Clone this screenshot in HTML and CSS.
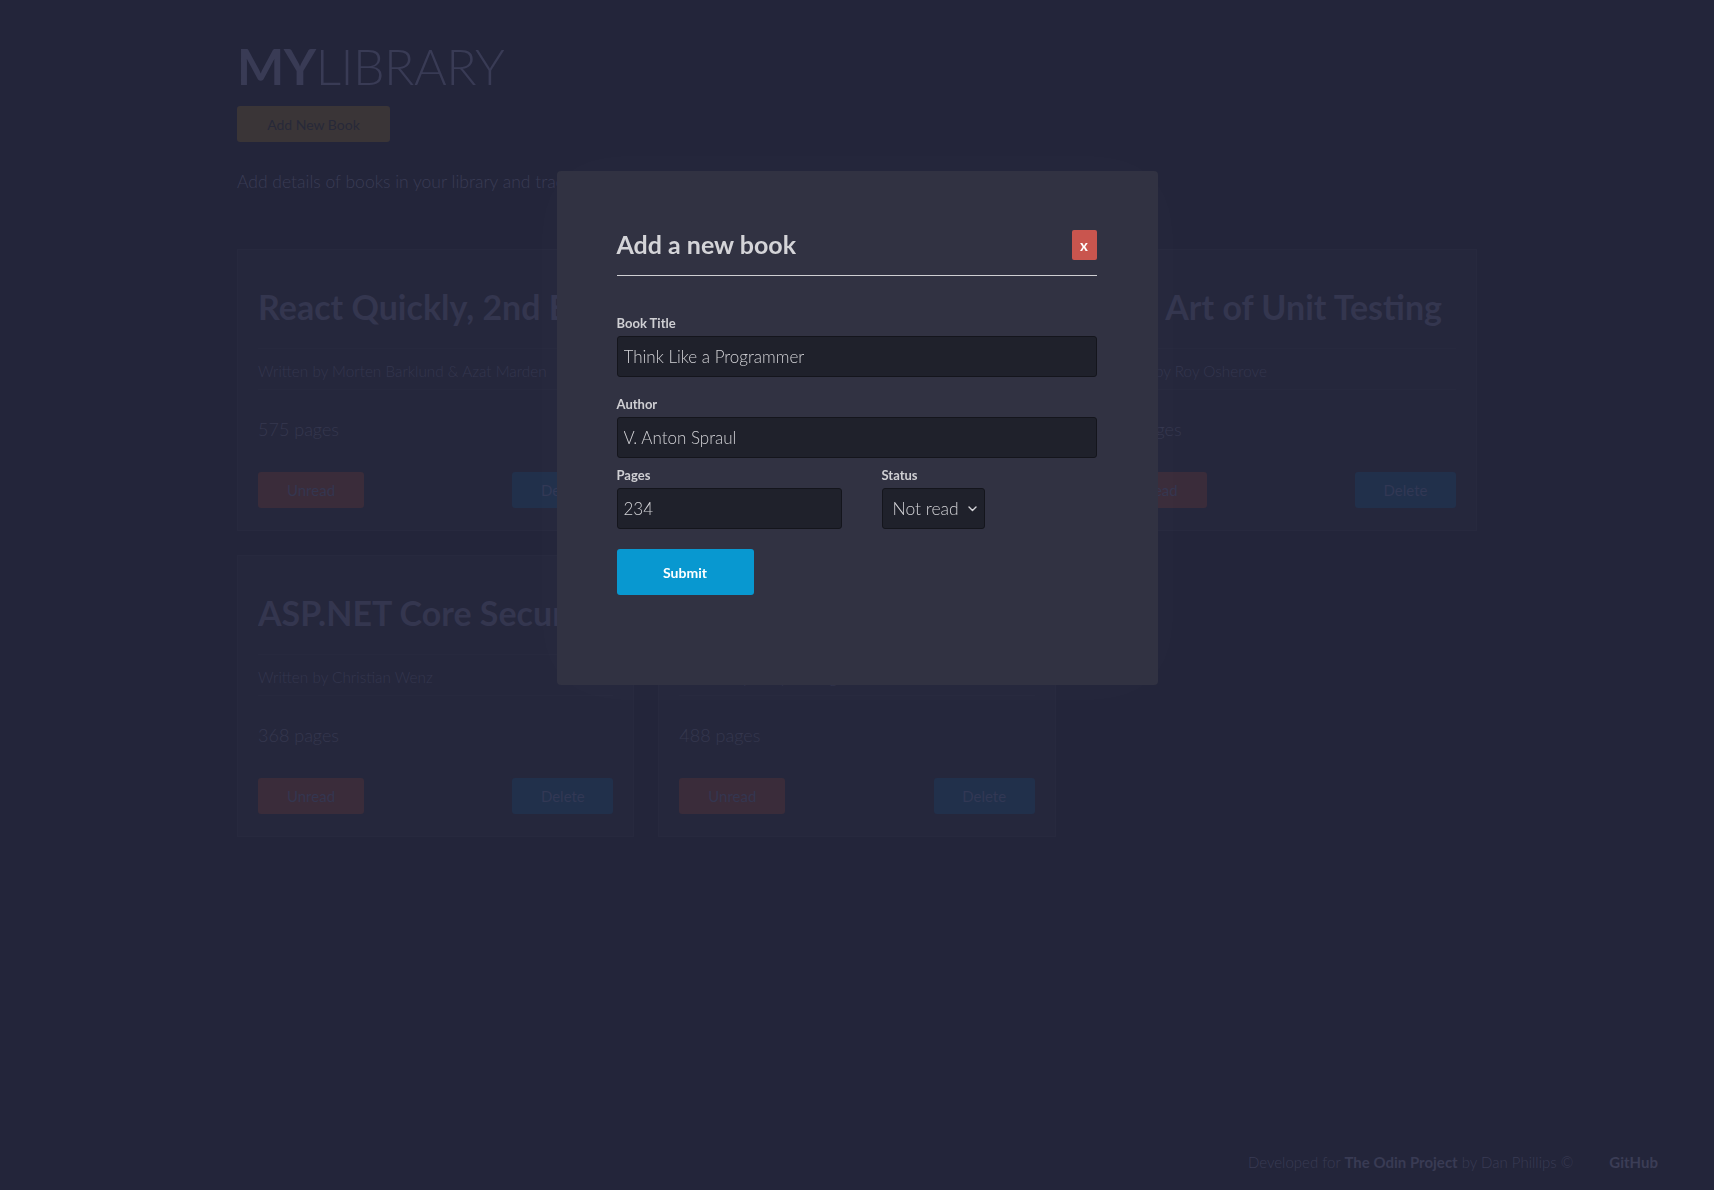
FILE: index.html
```html
<!DOCTYPE html>
<html lang="en">
<head>
<meta charset="utf-8">
<title>My Library</title>
<link rel="stylesheet" href="styles.css">
</head>
<body>
<div class="page">
  <main class="container">
    <h1 class="logo"><span class="logo-bold">MY</span><span class="logo-thin">LIBRARY</span></h1>
    <button class="btn-add" type="button">Add New Book</button>
    <p class="intro">Add details of books in your library and track which ones you have read.</p>

    <section class="cards">
      <article class="card">
        <h2 class="card-title">React Quickly, 2nd Edition</h2>
        <p class="card-author">Written by Morten Barklund &amp; Azat Marden</p>
        <p class="card-pages">575 pages</p>
        <div class="card-actions">
          <button class="btn-status" type="button">Unread</button>
          <button class="btn-delete" type="button">Delete</button>
        </div>
      </article>
      <article class="card">
        <h2 class="card-title">Eloquent JavaScript</h2>
        <p class="card-author">Written by Marijn Haverbeke</p>
        <p class="card-pages">472 pages</p>
        <div class="card-actions">
          <button class="btn-status" type="button">Unread</button>
          <button class="btn-delete" type="button">Delete</button>
        </div>
      </article>
      <article class="card">
        <h2 class="card-title">The Art of Unit Testing</h2>
        <p class="card-author">Written by Roy Osherove</p>
        <p class="card-pages">292 pages</p>
        <div class="card-actions">
          <button class="btn-status" type="button">Unread</button>
          <button class="btn-delete" type="button">Delete</button>
        </div>
      </article>
      <article class="card">
        <h2 class="card-title">ASP.NET Core Security</h2>
        <p class="card-author">Written by Christian Wenz</p>
        <p class="card-pages">368 pages</p>
        <div class="card-actions">
          <button class="btn-status" type="button">Unread</button>
          <button class="btn-delete" type="button">Delete</button>
        </div>
      </article>
      <article class="card">
        <h2 class="card-title">Grokking Algorithms</h2>
        <p class="card-author">Written by Aditya Bhargava</p>
        <p class="card-pages">488 pages</p>
        <div class="card-actions">
          <button class="btn-status" type="button">Unread</button>
          <button class="btn-delete" type="button">Delete</button>
        </div>
      </article>
    </section>
  </main>

  <footer class="footer">
    <span class="footer-credit">Developed for <strong>The Odin Project</strong> by Dan Phillips ©</span>
    <a class="footer-link" href="#">GitHub</a>
  </footer>
</div>

<div class="overlay">
  <div class="modal">
    <div class="modal-header">
      <h2 class="modal-title">Add a new book</h2>
      <button class="btn-close" type="button">x</button>
    </div>
    <form class="modal-form">
      <div class="field field-title">
        <label class="field-label" for="title">Book Title</label>
        <input class="field-input" id="title" type="text" value="Think Like a Programmer">
      </div>
      <div class="field field-author">
        <label class="field-label" for="author">Author</label>
        <input class="field-input" id="author" type="text" value="V. Anton Spraul">
      </div>
      <div class="field-row">
        <div class="field field-pages">
          <label class="field-label" for="pages">Pages</label>
          <input class="field-input" id="pages" type="text" value="234">
        </div>
        <div class="field field-status">
          <label class="field-label" for="status">Status</label>
          <div class="select-wrap">
            <select class="field-select" id="status">
              <option>Not read</option>
              <option>Read</option>
            </select>
            <svg class="select-chevron" width="9" height="6" viewBox="0 0 9 6"><path d="M1 1 L4.5 4.5 L8 1" fill="none" stroke="#d6d6da" stroke-width="1.4" stroke-linecap="round" stroke-linejoin="round"/></svg>
          </div>
        </div>
      </div>
      <button class="btn-submit" type="button">Submit</button>
    </form>
  </div>
</div>
</body>
</html>
```

FILE: styles.css
```css
* { box-sizing: border-box; }

html, body {
  margin: 0;
  padding: 0;
}

body {
  background: #23253a;
  font-family: "Lato", "Open Sans", sans-serif;
  color: #3a3c54;
}

.page {
  min-height: 100vh;
  display: flex;
  flex-direction: column;
}

.container {
  width: 1240px;
  margin: 0 auto;
  padding-top: 36px;
}

.logo {
  margin: 0;
  font-size: 50px;
  line-height: 60px;
  color: #393b55;
  letter-spacing: -0.5px;
}

.logo-bold { font-weight: 700; }
.logo-thin { font-weight: 300; }

.btn-add {
  display: block;
  margin-top: 10px;
  width: 153px;
  height: 36px;
  border: none;
  border-radius: 3px;
  background: #3a3537;
  color: #272939;
  font-family: inherit;
  font-size: 14px;
}

.intro {
  margin: 28px 0 0;
  font-size: 17.5px;
  line-height: 24px;
  font-weight: 300;
  color: #3a3c55;
}

.cards {
  margin-top: 55px;
  display: grid;
  grid-template-columns: repeat(3, 1fr);
  gap: 24px;
}

.card {
  background: #25273c;
  border: 1px solid #27293e;
  padding: 17px 20px 22px;
  min-width: 0;
}

.card-title {
  margin: 20px 0 21px;
  font-size: 34px;
  line-height: 40px;
  font-weight: 700;
  color: #34364f;
  white-space: nowrap;
  overflow: hidden;
  text-overflow: ellipsis;
}

.card-author {
  margin: 0;
  border-top: 1px solid #27293e;
  border-bottom: 1px solid #27293e;
  padding: 11px 0 7px;
  font-size: 15.3px;
  line-height: 22px;
  font-weight: 300;
  color: #34364e;
}

.card-pages {
  margin: 27px 0 0;
  font-size: 18px;
  line-height: 24px;
  font-weight: 300;
  color: #35374f;
}

.card-actions {
  margin-top: 31px;
  display: flex;
  justify-content: space-between;
}

.btn-status,
.btn-delete {
  height: 36px;
  border: none;
  border-radius: 3px;
  font-family: inherit;
  font-size: 15px;
  font-weight: 400;
}

.btn-status {
  width: 106px;
  background: #3a2c3a;
  color: #343650;
}

.btn-delete {
  width: 101px;
  background: #21304b;
  color: #323855;
}

.footer {
  margin-top: auto;
  display: flex;
  justify-content: flex-end;
  align-items: center;
  gap: 36px;
  padding: 0 56px 18px 0;
  font-size: 15px;
  line-height: 20px;
  font-weight: 300;
  color: #393b54;
}

.footer-credit strong { font-weight: 700; }

.footer-link {
  color: #3b3d56;
  font-weight: 700;
  text-decoration: none;
}

/* Modal */
.overlay {
  position: fixed;
  inset: 0;
  display: flex;
  justify-content: center;
  align-items: flex-start;
  padding-top: 171px;
}

.modal {
  width: 601px;
  background: #313242;
  border-radius: 4px;
  padding: 58px 61px 90px 60px;
  box-shadow: 0 0 70px rgba(255, 255, 255, 0.025);
  color: #d2d2d6;
}

.modal-header {
  display: flex;
  justify-content: space-between;
  align-items: center;
  padding-bottom: 15px;
  border-bottom: 1px solid #cfcfd3;
}

.modal-title {
  margin: 0;
  font-size: 25px;
  line-height: 31px;
  font-weight: 700;
  color: #d4d4d8;
}

.btn-close {
  width: 25px;
  height: 30px;
  padding: 0;
  border: none;
  border-radius: 2px;
  background: #c9554e;
  color: #ffffff;
  font-family: inherit;
  font-size: 15px;
  font-weight: 700;
}

.modal-form {
  margin-top: 39px;
}

.field { display: flex; flex-direction: column; }

.field-title { margin-bottom: 19px; }
.field-author { margin-bottom: 9px; }

.field-label {
  font-size: 13px;
  line-height: 16px;
  font-weight: 700;
  color: #cfcfd3;
  margin-bottom: 5px;
}

.field-input,
.field-select {
  height: 41px;
  background: #1f212b;
  border: 1px solid #14151c;
  border-radius: 3px;
  color: #d2d2d6;
  font-family: inherit;
  font-size: 17px;
  font-weight: 300;
  padding: 0 6px;
  outline: none;
}

.field-row {
  display: flex;
  gap: 40px;
}

.field-pages { width: 225px; }

.select-wrap {
  position: relative;
  width: 103px;
}

.field-select {
  width: 103px;
  appearance: none;
  -webkit-appearance: none;
  padding: 0 0 0 10px;
  font-size: 17.5px;
}

.select-chevron {
  position: absolute;
  right: 8px;
  top: 18px;
  pointer-events: none;
}

.btn-submit {
  margin-top: 20px;
  width: 137px;
  height: 46px;
  border: none;
  border-radius: 3px;
  background: #0898d0;
  color: #ffffff;
  font-family: inherit;
  font-size: 14px;
  font-weight: 700;
}
```
